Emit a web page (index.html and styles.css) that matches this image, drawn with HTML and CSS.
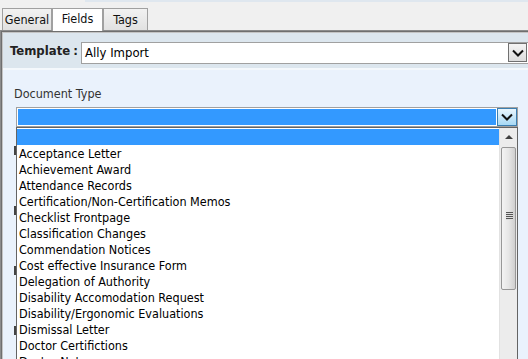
FILE: index.html
```html
<!DOCTYPE html>
<html lang="en">
<head>
<meta charset="UTF-8">
<title>Document Fields</title>
<link rel="stylesheet" href="styles.css">
</head>
<body>

<div class="tabs">
  <div class="tab tab-general">General</div>
  <div class="tab tab-fields active">Fields</div>
  <div class="tab tab-tags">Tags</div>
</div>

<div class="panel">
  <div class="template-bar">
    <label class="template-label">Template<span class="colon">:</span></label>
    <div class="combo">
      <span class="combo-text">Ally Import</span>
      <span class="combo-btn">
        <svg width="12" height="8" viewBox="0 0 12 8"><path d="M1 1.5 L6 6.5 L11 1.5" fill="none" stroke="#111" stroke-width="2"/></svg>
      </span>
    </div>
  </div>

  <div class="fields">
    <div class="field-label">Document Type</div>
    <div class="doc-wrap">
      <div class="doc-combo">
        <span class="doc-fill"></span>
        <span class="doc-btn">
          <svg width="12" height="8" viewBox="0 0 12 8"><path d="M1 1.5 L6 6.5 L11 1.5" fill="none" stroke="#111" stroke-width="2"/></svg>
        </span>
      </div>

      <!-- edges of the next field labels, the rest is under the open list -->
      <div class="label-edge first"></div>
      <div class="label-edge"></div>
      <div class="label-edge"></div>
      <div class="label-edge"></div>

      <div class="dropdown">
        <ul class="options">
          <li class="selected">&nbsp;</li>
          <li>Acceptance Letter</li>
          <li>Achievement Award</li>
          <li>Attendance Records</li>
          <li>Certification/Non-Certification Memos</li>
          <li>Checklist Frontpage</li>
          <li>Classification Changes</li>
          <li>Commendation Notices</li>
          <li>Cost effective Insurance Form</li>
          <li>Delegation of Authority</li>
          <li>Disability Accomodation Request</li>
          <li>Disability/Ergonomic Evaluations</li>
          <li>Dismissal Letter</li>
          <li>Doctor Certifictions</li>
          <li>Doctor Notes</li>
        </ul>
        <div class="scrollbar">
          <div class="arrow-up"></div>
          <div class="thumb"><div class="grip"></div></div>
        </div>
      </div>
    </div>
  </div>
</div>

</body>
</html>
```

FILE: styles.css
```css
/* Fields tab */
body {
  margin: 0;
  width: 528px;
  height: 359px;
  overflow: hidden;
  background-color: #f0f0f0;
  font-family: "DejaVu Sans Condensed", "DejaVu Sans", sans-serif;
  font-size: 12.5px;
  color: #000;
}

.tabs {
  height: 30px;
  display: flex;
  align-items: flex-end;
  padding-left: 2px;
  box-sizing: border-box;
  background: linear-gradient(to right, #f0f0f0 85px, #dfe7ef 85px) top / 100% 2px no-repeat;
}

.tab {
  height: 19px;
  padding-top: 2px;
  line-height: 17px;
  text-align: center;
  border: 1px solid #a0a0a0;
  border-bottom: none;
  background: linear-gradient(#f2f2f2, #e1e1e1);
  color: #111;
}

.tab-general {
  width: 48px;
}

.tab-fields {
  width: 49px;
}

.tab-tags {
  width: 43px;
}

.tab.active {
  height: 22px;
  padding-top: 0;
  line-height: 19px;
  background: #fff;
  margin-bottom: -1px;
  position: relative;
  z-index: 1;
}

.panel {
  border-top: 1px solid #8c8c8c;
  border-left: 1px solid #8c8c8c;
  box-shadow: inset 1px 1px 0 #6f6f6f, inset 2px 2px 0 #c4c4c4;
  background-color: #eaf2fc;
  height: 329px;
  box-sizing: border-box;
  padding: 2px 0 0 2px;
}

.template-bar {
  height: 35px;
  background-color: #dce6ee;
  border-bottom: 2px solid #f4f8fc;
  display: flex;
  align-items: center;
  padding-left: 7px;
}

.template-label {
  font-weight: bold;
  font-size: 13px;
  color: #222;
  width: 71px;
}

.colon {
  margin-left: 3px;
}

.combo {
  flex: 1;
  height: 20px;
  margin-top: 4px;
  background: #fff;
  border: 1px solid #a0a0a0;
  border-right: none;
  display: flex;
  align-items: center;
  justify-content: space-between;
  font-size: 13px;
}

.combo-text {
  padding-left: 3px;
}

.combo-btn {
  width: 17px;
  height: 17px;
  margin-right: 1px;
  border: 1px solid #707070;
  background: linear-gradient(#f4f4f4, #dcdcdc);
  display: flex;
  align-items: center;
  justify-content: center;
}

.fields {
  padding: 16px 10px 0 11px;
}

.field-label {
  color: #333;
  height: 15px;
}

.doc-wrap {
  position: relative;
  margin-top: 6px;
  padding-left: 2px;
}

.doc-combo {
  height: 18px;
  border: 1px solid #a0a0a0;
  display: flex;
}

.doc-fill {
  flex: 1;
  background-color: #3399ff;
  border: 1px solid #fff;
}

.doc-btn {
  width: 20px;
  height: 18px;
  box-sizing: border-box;
  border: 1px solid #3c7fb1;
  background: linear-gradient(#eaf6fd, #a7d9f5);
  display: flex;
  align-items: center;
  justify-content: center;
}

.label-edge {
  width: 2px;
  height: 9px;
  margin: 51px 0 0 -2px;
  background-color: #444;
}

.label-edge.first {
  margin-top: 19px;
}

.dropdown {
  position: absolute;
  top: 20px;
  left: 2px;
  right: 0;
  height: 240px;
  background: #fff;
  border: 1px solid #646464;
  display: flex;
  z-index: 2;
}

.options {
  list-style: none;
  margin: 0;
  padding: 1px 0 0;
  flex: 1;
}

.options li {
  height: 16px;
  line-height: 17px;
  padding-left: 2px;
  white-space: nowrap;
}

.options li.selected {
  background-color: #3399ff;
}

.scrollbar {
  width: 17px;
  background-color: #ececec;
  border-left: 1px solid #e2e2e2;
}

.arrow-up {
  width: 0;
  height: 0;
  margin: 7px auto 0;
  border-left: 4px solid transparent;
  border-right: 4px solid transparent;
  border-bottom: 4px solid #404040;
}

.thumb {
  margin: 8px 1px 0 1px;
  height: 141px;
  border: 1px solid #979797;
  border-radius: 2px;
  background: linear-gradient(90deg, #f3f3f3, #e6e6e6 50%, #cfcfcf);
  position: relative;
}

.grip {
  position: absolute;
  top: 64px;
  left: 4px;
  width: 7px;
  height: 8px;
  background: repeating-linear-gradient(#555 0 1px, #ddd 1px 2px);
}
```
